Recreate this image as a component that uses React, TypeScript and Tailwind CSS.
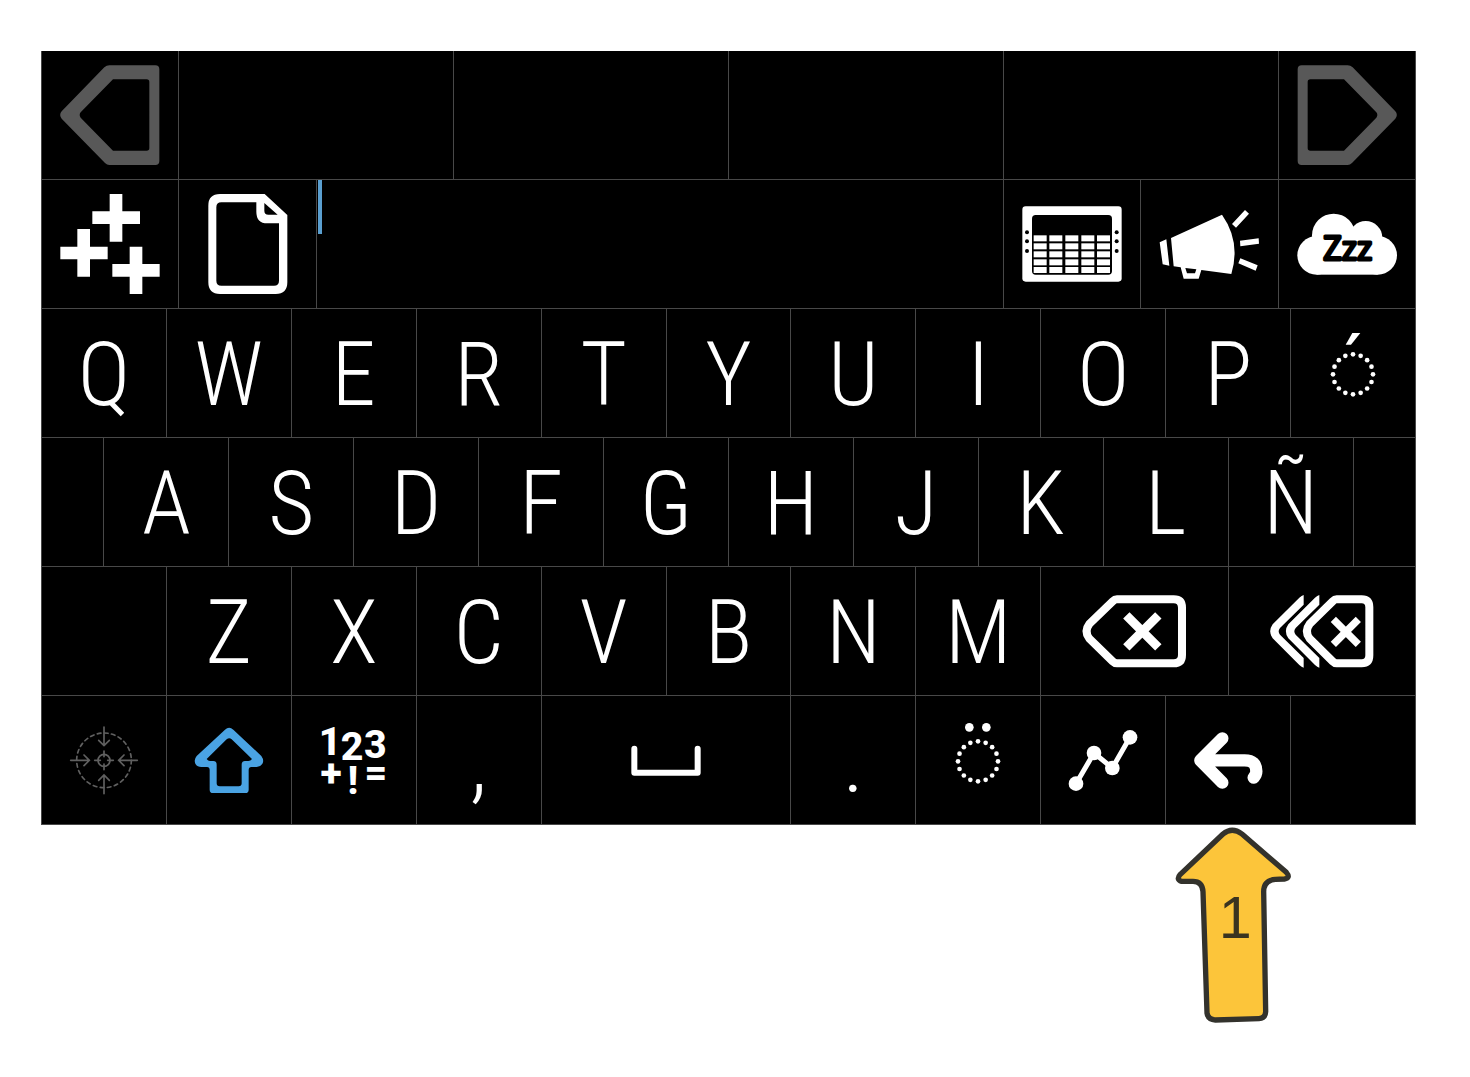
import type { ReactNode } from 'react';

const cell =
  'flex min-w-0 items-center justify-center border-r border-b border-[#484848] bg-black text-white';

type KeyProps = { label: string; span?: string; children?: ReactNode };

function Key({ label, span = '', children }: KeyProps) {
  return (
    <button type="button" aria-label={label} className={`${cell} ${span}`}>
      {children}
    </button>
  );
}

function Letter({ char, span = 'col-span-2' }: { char: string; span?: string }) {
  return (
    <button type="button" className={`${cell} ${span} pt-0.5 text-[89px] leading-none font-[340]`}>
      {char}
    </button>
  );
}

function Blank({ span = '' }: { span?: string }) {
  return <div className={`${cell} ${span}`} />;
}

function Icon({ box, size = 'size-20', children }: { box: string; size?: string; children: ReactNode }) {
  return (
    <svg viewBox={box} className={`${size} shrink-0 overflow-visible`} fill="currentColor" aria-hidden="true">
      {children}
    </svg>
  );
}

function PageArrow({ flip = false }: { flip?: boolean }) {
  return (
    <Icon box="89 75 300 300" size={flip ? 'size-[100px] -scale-x-100' : 'size-[100px]'}>
      <path
        fill="#585858"
        fillRule="evenodd"
        d="M237 76H375Q387 76 387 88V363Q387 375 375 375H237Q230 375 224 369L94 236Q85 225 94 214L222 82Q229 76 237 76Z M248 118L151 217Q145 225 151 233L248 332H349Q357 332 357 324V126Q357 118 349 118Z"
      />
    </Icon>
  );
}

function PlusesIcon() {
  return (
    <Icon box="89 462 300 300" size="size-[100px]">
      <path d="M238 462h38v52h53v38h-53v53h-38v-53h-52v-38h52z M141 567h38v53h53v38h-53v52h-38v-52h-51v-38h51z M298 620h38v52h52v38h-52v52h-38v-52h-52v-38h52z" />
    </Icon>
  );
}

function PageIcon() {
  return (
    <Icon box="502 462 300 300" size="size-[100px]">
      <path
        fillRule="evenodd"
        d="M568 462H702L770 525V727Q770 762 735 762H568Q533 762 533 727V497Q533 462 568 462Z M572 487Q557 487 557 502V722Q557 737 572 737H730Q745 737 745 722V550H710Q677 550 677 515V487Z M701 489V512Q701 524 713 524H741Z"
      />
    </Icon>
  );
}

const columns = [131, 178, 226, 274, 321];
const lines = [586, 610, 634, 658, 681];

function DeviceIcon() {
  return (
    <Icon box="96 462 300 300" size="size-[100px]">
      <rect x="97" y="499" width="298" height="226" rx="10" />
      <rect x="126" y="525" width="240" height="179" rx="11" fill="#000" />
      {columns.map((x) => lines.map((y) => <rect key={`${x}-${y}`} x={x} y={y} width="39" height="18" />))}
      {[577, 604, 633].map((y) => (
        <g key={y} fill="#000">
          <circle cx="111" cy={y} r="6" />
          <circle cx="380" cy={y} r="6" />
        </g>
      ))}
    </Icon>
  );
}

function MegaphoneIcon() {
  return (
    <Icon box="507 462 300 300" size="size-[100px]">
      <path
        fillRule="evenodd"
        d="M543 594L696 524Q753 605 724 702L634 690L626 716H581L572 682L551 679Z M586 684L619 688L615 700H591Z"
      />
      <path d="M509 607L529 598L538 677L518 673Z M726 552L765 510L777 521L738 563Z M750 602L806 595L807 611L751 619Z M751 655L803 676L797 692L745 670Z" />
    </Icon>
  );
}

function SleepIcon() {
  return (
    <Icon box="920 462 300 300" size="size-[100px]">
      <circle cx="979" cy="646" r="58" />
      <circle cx="1030" cy="586" r="65" />
      <circle cx="1126" cy="593" r="50" />
      <circle cx="1162" cy="646" r="58" />
      <rect x="979" y="590" width="183" height="114" />
      <text
        x="1072"
        y="660"
        textAnchor="middle"
        fontSize="97"
        fill="#000"
        stroke="#000"
        strokeWidth="9"
        strokeLinejoin="round"
        className="font-['Open_Sans',sans-serif] font-medium"
      >
        Zzz
      </text>
    </Icon>
  );
}

const ring = Array.from({ length: 16 }, (_, i) => {
  const a = (i * Math.PI) / 8;
  return { x: 60 * Math.cos(a), y: 60 * Math.sin(a) };
});

function DottedRing({ accent }: { accent: ReactNode }) {
  return (
    <Icon box="-120 -124 240 240">
      {ring.map((p, i) => (
        <circle key={i} cx={p.x} cy={p.y} r="7" />
      ))}
      {accent}
    </Icon>
  );
}

function BackspaceIcon() {
  return (
    <Icon box="121 63 324 240" size="h-20 w-[108px]">
      <g fill="none" stroke="currentColor">
        <path
          strokeWidth="24"
          d="M232 88H402Q427 88 427 113V255Q427 280 402 280H232Q225 280 219 274L149 206Q132 184 149 162L219 94Q225 88 232 88Z"
        />
        <path strokeWidth="27" d="M260 136L356 232M356 136L260 232" />
      </g>
    </Icon>
  );
}

function DeleteWordIcon() {
  const chevron =
    'M791 75V104L720 174Q712 184 720 194L791 264V293Q785 291 778 285L698 205Q683 184 698 163L778 83Q785 77 791 75Z';
  return (
    <Icon box="684 63 324 240" size="h-20 w-[108px]">
      <path d={chevron} />
      <path d={chevron} transform="translate(47 0)" />
      <g fill="none" stroke="currentColor">
        <path
          strokeWidth="24"
          d="M890 88H965Q988 88 988 112V256Q988 280 965 280H890Q884 280 878 274L809 206Q792 184 809 162L878 94Q884 88 890 88Z"
        />
        <path strokeWidth="22" d="M880 148L955 223M955 148L880 223" />
      </g>
    </Icon>
  );
}

function TargetIcon() {
  return (
    <Icon box="-120 -121 240 240">
      <g fill="none" stroke="#606060" strokeWidth="5" strokeLinecap="round">
        <circle r="82" strokeDasharray="11 10.5" />
        <circle r="18" />
        {['rotate(0)', 'rotate(90)', 'rotate(180)', 'rotate(270)'].map((t) => (
          <path key={t} transform={t} d="M0 -100V-44M-16 -60L0 -44L16 -60M0 -28V-11" />
        ))}
      </g>
    </Icon>
  );
}

function ShiftIcon() {
  return (
    <Icon box="475 90 240 240">
      <path
        fill="#4aa3e3"
        fillRule="evenodd"
        d="M583 119Q595 108 608 119L692 198Q702 212 694 223Q689 231 678 231H662Q654 231 654 240V299Q654 309 644 309H547Q537 309 537 299V240Q537 231 529 231H512Q500 231 495 223Q488 210 498 198Z M603 148Q596 141 588 148L528 207Q532 213 538 213H548Q558 213 558 224V280Q558 289 567 289H624Q633 289 633 280V224Q633 213 643 213H653Q660 213 664 207Z"
      />
    </Icon>
  );
}

function NumbersIcon() {
  return (
    <Icon box="852 90 240 240">
      <g className="font-[Roboto,sans-serif] font-extrabold" fontSize="118" textAnchor="middle">
        <text x="900" y="195">1</text>
        <text x="966" y="210">2</text>
        <text x="1036" y="205">3</text>
        <text x="903" y="288">+</text>
        <text x="969" y="312">!</text>
        <text x="1038" y="287">=</text>
      </g>
    </Icon>
  );
}

function SpaceIcon() {
  return (
    <Icon box="77 90 240 240">
      <path
        d="M102 176V248H292V176"
        fill="none"
        stroke="currentColor"
        strokeWidth="18"
        strokeLinecap="round"
        strokeLinejoin="round"
      />
    </Icon>
  );
}

function GraphIcon() {
  return (
    <Icon box="69 450 240 240">
      <path d="M108 641L162 549L217 594L270 502" fill="none" stroke="currentColor" strokeWidth="15" />
      <circle cx="108" cy="641" r="22" />
      <circle cx="162" cy="549" r="22" />
      <circle cx="217" cy="594" r="22" />
      <circle cx="270" cy="502" r="22" />
    </Icon>
  );
}

function ReturnIcon() {
  return (
    <Icon box="444 450 240 240">
      <path
        d="M547 505L481 571L547 638M485 571H614Q649 571 649 604Q649 614 641 623"
        fill="none"
        stroke="currentColor"
        strokeWidth="37"
        strokeLinecap="round"
        strokeLinejoin="round"
      />
    </Icon>
  );
}

function Pointer() {
  return (
    <svg viewBox="38 28 360 600" className="mr-[123px] h-[200px] w-[120px]" role="img" aria-label="Step 1">
      <path
        d="M188 55Q215 32 245 55L378 170Q392 187 372 190L345 191Q310 194 310 228L316 588Q315 608 296 609L165 613Q143 612 140 592L128 228Q126 197 98 197L64 197Q46 192 60 176Z"
        fill="#fcc53a"
        stroke="#33322c"
        strokeWidth="16"
        strokeLinejoin="round"
      />
      <text x="225" y="368" textAnchor="middle" fontSize="178" fill="#3a3420" className="font-['Liberation_Sans',sans-serif]">
        1
      </text>
    </svg>
  );
}

export default function App() {
  return (
    <main className="min-h-screen bg-white pt-[51px] pr-[54px] pb-12 pl-[41px] font-['Roboto_Condensed',Roboto,sans-serif]">
      <section aria-label="Keyboard" className="border-l border-[#484848] bg-black">
        <div className="grid h-[129px] grid-cols-10">
          <Key label="Previous page"><PageArrow /></Key>
          <Key label="Prediction 1" span="col-span-2" />
          <Key label="Prediction 2" span="col-span-2" />
          <Key label="Prediction 3" span="col-span-2" />
          <Key label="Prediction 4" span="col-span-2" />
          <Key label="Next page"><PageArrow flip /></Key>
        </div>
        <div className="grid h-[129px] grid-cols-10">
          <Key label="More"><PlusesIcon /></Key>
          <Key label="New document"><PageIcon /></Key>
          <label className="col-span-5 flex min-w-0 items-start border-r border-b border-[#484848] pl-px">
            <span className="h-[54px] w-[4px] shrink-0 bg-[#5a9fd0]" />
            <input
              type="text"
              aria-label="Message"
              className="h-full min-w-0 flex-1 bg-transparent text-5xl text-white outline-none"
            />
          </label>
          <Key label="Device"><DeviceIcon /></Key>
          <Key label="Alert"><MegaphoneIcon /></Key>
          <Key label="Rest"><SleepIcon /></Key>
        </div>
        <div className="grid h-[129px] grid-cols-22">
          {[...'QWERTYUIOP'].map((c) => <Letter key={c} char={c} />)}
          <Key label="Acute accent" span="col-span-2">
            <DottedRing accent={<path d="M-22 -89L-2 -124H22L-6 -89Z" />} />
          </Key>
        </div>
        <div className="grid h-[129px] grid-cols-22">
          <Blank />
          {[...'ASDFGHJKLÑ'].map((c) => <Letter key={c} char={c} />)}
          <Blank />
        </div>
        <div className="grid h-[129px] grid-cols-22">
          <Blank span="col-span-2" />
          {[...'ZXCVBNM'].map((c) => <Letter key={c} char={c} />)}
          <Key label="Backspace" span="col-span-3"><BackspaceIcon /></Key>
          <Key label="Delete word" span="col-span-3"><DeleteWordIcon /></Key>
        </div>
        <div className="grid h-[129px] grid-cols-22">
          <Key label="Calibrate" span="col-span-2"><TargetIcon /></Key>
          <Key label="Shift" span="col-span-2"><ShiftIcon /></Key>
          <Key label="Numbers and symbols" span="col-span-2"><NumbersIcon /></Key>
          <Letter char="," />
          <Key label="Space" span="col-span-4"><SpaceIcon /></Key>
          <Letter char="." />
          <Key label="Diaeresis" span="col-span-2">
            <DottedRing
              accent={
                <>
                  <circle cx="-26" cy="-102" r="13" />
                  <circle cx="25" cy="-102" r="13" />
                </>
              }
            />
          </Key>
          <Key label="Swipe" span="col-span-2"><GraphIcon /></Key>
          <Key label="Return" span="col-span-2"><ReturnIcon /></Key>
          <Blank span="col-span-2" />
        </div>
      </section>
      <div className="flex justify-end">
        <Pointer />
      </div>
    </main>
  );
}
